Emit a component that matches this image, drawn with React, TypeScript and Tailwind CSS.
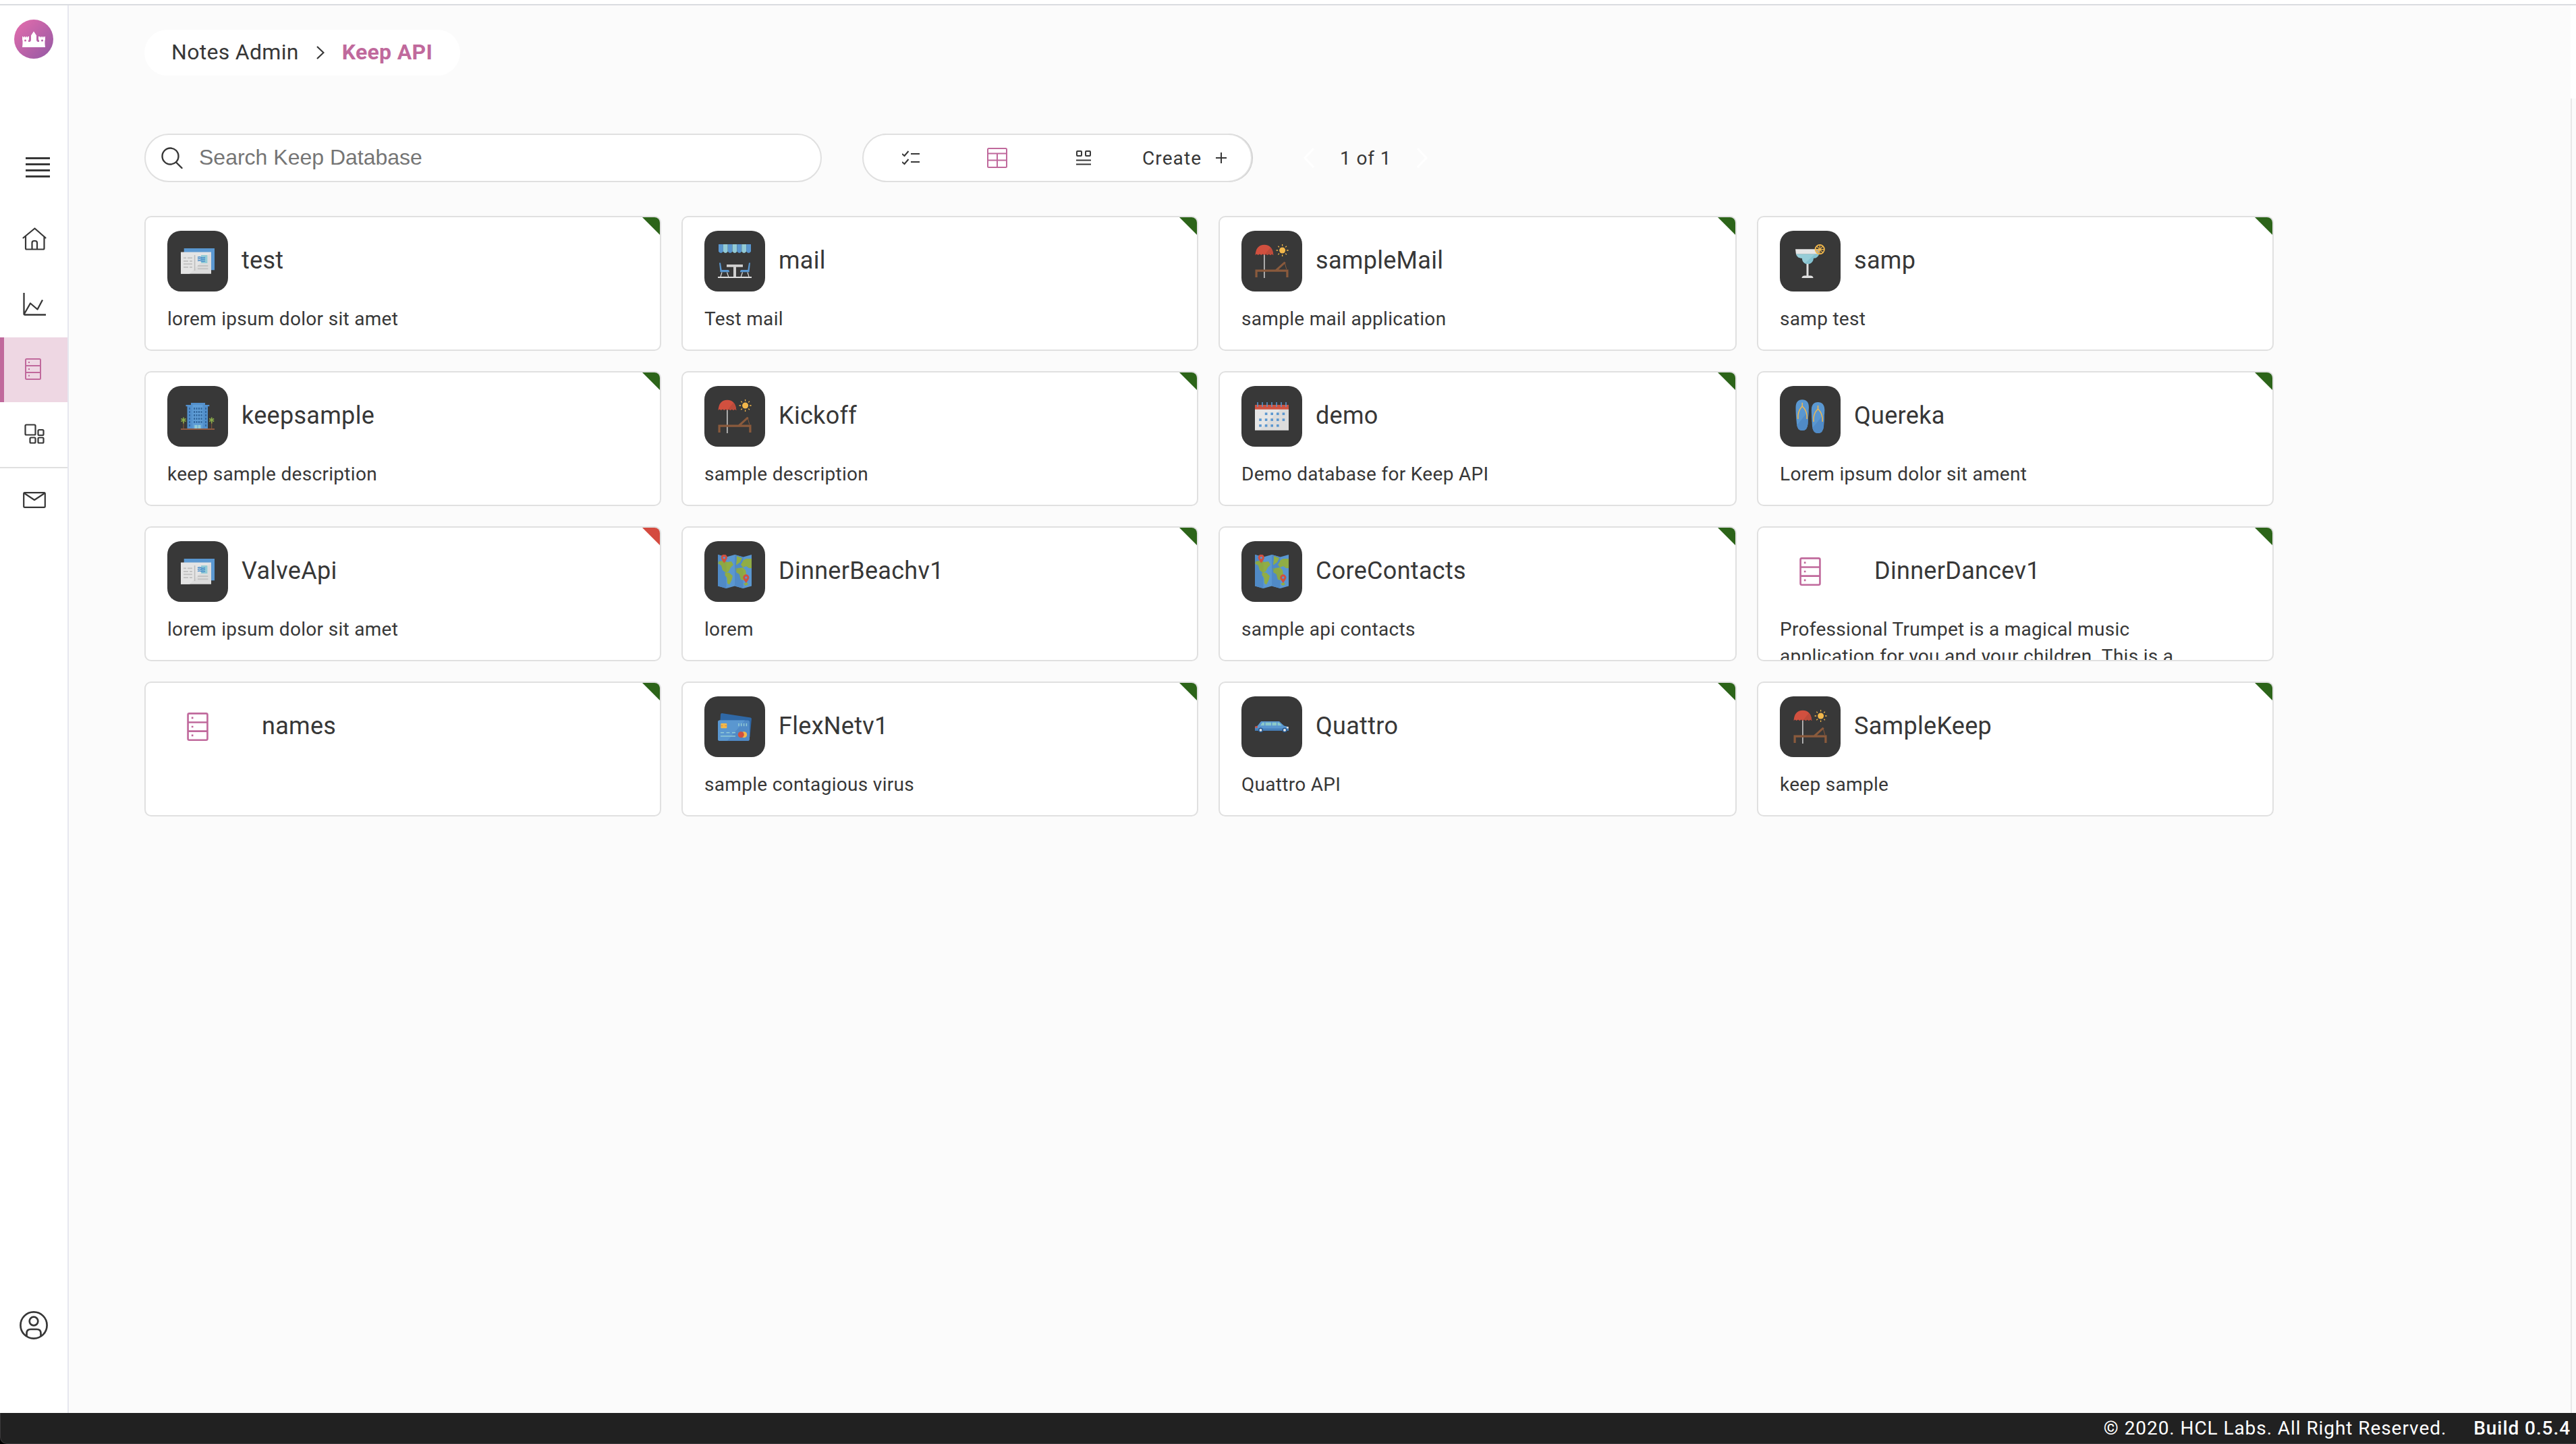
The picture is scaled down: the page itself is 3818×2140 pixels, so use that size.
import React from "react";

type IconName =
  | "news" | "cafe" | "beach" | "cocktail" | "building" | "calendar"
  | "sandals" | "map" | "cards" | "limo" | "database";

type Api = { name: string; description: string; icon: IconName; inactive?: boolean };

const APIS: Api[] = [
  { name: "test", description: "lorem ipsum dolor sit amet", icon: "news" },
  { name: "mail", description: "Test mail", icon: "cafe" },
  { name: "sampleMail", description: "sample mail application", icon: "beach" },
  { name: "samp", description: "samp test", icon: "cocktail" },
  { name: "keepsample", description: "keep sample description", icon: "building" },
  { name: "Kickoff", description: "sample description", icon: "beach" },
  { name: "demo", description: "Demo database for Keep API", icon: "calendar" },
  { name: "Quereka", description: "Lorem ipsum dolor sit ament", icon: "sandals" },
  { name: "ValveApi", description: "lorem ipsum dolor sit amet", icon: "news", inactive: true },
  { name: "DinnerBeachv1", description: "lorem", icon: "map" },
  { name: "CoreContacts", description: "sample api contacts", icon: "map" },
  {
    name: "DinnerDancev1",
    description: "Professional Trumpet is a magical music application for you and your children. This is a",
    icon: "database",
  },
  { name: "names", description: "", icon: "database" },
  { name: "FlexNetv1", description: "sample contagious virus", icon: "cards" },
  { name: "Quattro", description: "Quattro API", icon: "limo" },
  { name: "SampleKeep", description: "keep sample", icon: "beach" },
];

function News() {
  return (
    <>
      <path d="M4.7 6H50V38.3H4.7z" fill="#5a97d0" />
      <path d="M0 11.7H45V43.7H0z" fill="#dcdcdc" />
      <path d="M0 11.7H45L13 43.7H0z" fill="#e4e4e4" />
      <path d="M20.6 16V39" stroke="#bdbdbd" strokeWidth="1.6" />
      <path d="M4 20.3h4M10 20.3h7M4 25h7M13 25h4M4 29.3h13M4 34h7M13 34h4M25 32h15.4M25 36.3h15.4" stroke="#c3c3c3" strokeWidth="2" />
      <path d="M30 16H39.4V28H30z" fill="#93cbd6" />
      <path d="M25 19.5q2.5-1.5 5 0t6 0M25 22q2.5-1.5 5 0t6 0M25 24.7q2.5-1.5 5 0t6 0" stroke="#4a8ecb" strokeWidth="1.5" fill="none" />
    </>
  );
}

function Cafe() {
  const stripes = ["#5a97d0", "#93cbd6", "#5a97d0", "#93cbd6", "#5a97d0", "#93cbd6", "#5a97d0"];
  return (
    <>
      {stripes.map((c, i) => (
        <path key={i} d={`M${1 + i * 6.86} 0h6.86v10.5q-1 2.4-3.43 2.4t-3.43-2.4z`} fill={c} />
      ))}
      <path d="M0 49H50" stroke="#dedede" strokeWidth="2" />
      <path d="M13 30H37V33.8H27V48H23V33.8H13z" fill="#cfcfcf" />
      <path d="M6 41.5L4 48M13.5 41.5L15.7 48M44 41.5L46 48M36.5 41.5L34.3 48" stroke="#dedede" strokeWidth="1.2" />
      <path d="M2 27.5h2l1.7 10.5H15q2 0 2 3.3H3.5zM48 27.5h-2l-1.7 10.5H35q-2 0-2 3.3H46.5z" fill="#5a97d0" />
    </>
  );
}

function Beach() {
  return (
    <>
      <path d="M13.9 14V50" stroke="#dedede" strokeWidth="1.4" />
      <path d="M.5 16Q1.5 1 13.9.8Q26.3 1 27.3 16l-2-1.6-2.3 1.6-2.3-1.6-2.3 1.6-2.3-1.6-2.2 1.6-2.3-1.6L9.3 16 7 14.4 4.7 16 2.6 14.4z" fill="#d1503f" />
      <path d="M23 4.7Q27 9 27.3 16l-2-1.6-2.3 1.6-2.3-1.6-2.3 1.6-2.3-1.6-2.2 1.6z" fill="#bd4b3b" />
      <circle cx="40.6" cy="9" r="4.5" fill="#f3b84b" />
      <path d="M40.6 0v2.5M40.6 15.5V18M31.6 9h2.5M47.1 9h2.5M34.3 2.7L36 4.4M45.2 13.6l1.7 1.7M46.9 2.7l-1.7 1.7M36 13.6l-1.7 1.7" stroke="#f3b84b" strokeWidth="1.3" />
      <path d="M.5 37.4H30.3L43.5 25.7l2.3 1.7L35 37.4H49.5V49H46.3V40.7H3.7V49H.5z" fill="#8a5a3c" />
      <path d="M44 27l2.8 10" stroke="#8a5a3c" strokeWidth="1" />
    </>
  );
}

function Cocktail() {
  return (
    <>
      <path d="M3 7.3H39L38 14.7H4z" fill="#e6e6e6" />
      <path d="M4 14.7H38.2Q36 20.7 30 20.7Q29.5 27 23.5 29.3H18.5Q13 26 13 20.7Q6 20.5 4 14.7z" fill="#84c2d0" />
      <path d="M4 14.7H32L17 28Q13 26 13 20.7Q6 20.5 4 14.7z" fill="#97cdd8" />
      <path d="M19.5 29h3V46.5H26q3.5.5 3.5 3.5H12.5q0-3 3.5-3.5h3.5z" fill="#e0e0e0" />
      <circle cx="39.2" cy="7.6" r="6.7" fill="#393939" fillOpacity=".35" stroke="#f3b84b" strokeWidth="1.8" />
      <path d="M39.2 1v13.2M32.6 7.6h13.2M34.5 2.9l9.4 9.4M43.9 2.9l-9.4 9.4" stroke="#f3b84b" strokeWidth="1.2" />
    </>
  );
}

function Building() {
  return (
    <>
      <path d="M15 5H36V8H42.3V10.3H40V43.3H9.5V10.3H7.5V8H15z" fill="#5390cc" />
      <path d="M17.5 8H32.5V43H17.5z" fill="#5f9dd6" />
      {[12, 17, 22, 27, 32].map((y) => (
        <path key={y} d={`M12 ${y}h2v3h-2zM19 ${y}h2v3h-2zM22.5 ${y}h2v3h-2zM26 ${y}h2v3h-2zM29.5 ${y}h2v3h-2zM36 ${y}h2v3h-2z`} fill="#33689f" />
      ))}
      <path d="M12 37h2v3h-2zM36 37h2v3h-2z" fill="#33689f" />
      <path d="M20.3 38H24.5V43H20.3zM25.5 38H29.6V43H25.5z" fill="#93cbd6" />
      <path d="M4 31V43M45.7 31V43" stroke="#8a5a3c" strokeWidth="1" />
      <path d="M4 26.5v9M.5 28.5l7 4M7.5 28.5l-7 4M45.7 26.5v9M42.2 28.5l7 4M49.2 28.5l-7 4" stroke="#8cae4a" strokeWidth="1.6" />
      <path d="M0 44H50" stroke="#8f5a42" strokeWidth="2" />
    </>
  );
}

function Calendar() {
  const cols = [6.2, 14.8, 23.4, 32, 40.6];
  const rows: [number, number, number][] = [[19.5, 1, 5], [28.3, 0, 5], [37, 0, 4]];
  return (
    <>
      <path d="M0 14H50V46H0z" fill="#dcdcdc" />
      <path d="M0 14H38L6 46H0z" fill="#e6e6e6" />
      <path d="M0 45.5H50" stroke="#bababa" strokeWidth="1" />
      <path d="M0 8H50V14.7H0z" fill="#cf5341" />
      <path d="M4 4v7M11 4v7M18 4v7M25 4v7M32 4v7M39 4v7M46 4v7" stroke="#5a97d0" strokeWidth="1.5" />
      {rows.map(([y, from, to]) =>
        cols.slice(from, to).map((x) => <rect key={`${x}-${y}`} x={x} y={y} width="3.6" height="3.6" fill="#5a97d0" />)
      )}
    </>
  );
}

function Sandals() {
  return (
    <>
      <path d="M3.5 12Q3.5.3 13.2.3T23 12Q22 24 21.5 36Q21 46 13.2 46T5 36Q3.5 22 3.5 12z" fill="#5a97d0" />
      <path d="M26.8 16Q26.8 4 36.5 4T46.3 16Q46 28 45 40Q44 50 36.5 50T28 40Q27 26 26.8 16z" fill="#5a97d0" />
      <path d="M22.7 17Q22 28 21.5 36Q21 46 13.2 46Q7 46 5.3 38zM46 21Q45.5 32 45 40Q44 50 36.5 50Q30 50 28.3 42z" fill="#508ac6" />
      <path d="M13.2 4.7V10Q7.5 16 6.9 24v5M13.2 10Q19.5 16 20.1 24v5M36.5 9V14Q30.5 20 30 28v5M36.5 14Q42.5 20 43.2 28v5" stroke="#f3b84b" strokeWidth="1.5" fill="none" />
    </>
  );
}

function WorldMap() {
  return (
    <>
      <path d="M0 0L12.5 3.5L25 0L37.5 3.5L50 0V46.5L37.5 50L25 46.5L12.5 50L0 46.5z" fill="#5a97d0" />
      <path d="M0 0L12.5 3.5V50L0 46.5zM25 0L37.5 3.5V50L25 46.5z" fill="#508ac6" />
      <path d="M2 10L9 9l5 2 6-1 3 5-4 4-3 6-4 2-5-4-2-7-5-3zM10.5 27l6-.5 5.5 5-1.5 6-3.5 7-3-2-.5-8-3-4zM28 2l8 3-3 6-5 4-1 0 1-8zM38 8l4-2 8 0V20l-4 0-4-3-5 2-3-4zM29 20l8-1 4 4 1 6-3 9-5-1-2-8-5-3zM38 43l5-2 2 3-4 2z" fill="#90ad45" />
      <path d="M0 10l7-1 5.500 2V26L9 24 6 18 2 13zM25 20h8l4.500 3V37l-4-1-2-7-4-3z" fill="#85a345" fillOpacity=".5" />
      <path d="M9.3 12.500Q4.700 6.500 4.700 4.200A4.600 4.600 0 0 1 13.900 4.200Q13.900 6.500 9.300 12.500zM41.800 42Q37.200 36 37.200 33.900A4.600 4.600 0 0 1 46.400 33.900Q46.400 36 41.800 42z" fill="#d1503f" />
      <circle cx="9.3" cy="4.6" r="1.7" fill="#5a97d0" />
      <circle cx="41.8" cy="34" r="1.7" fill="#5a97d0" />
    </>
  );
}

function Cards() {
  return (
    <>
      <path d="M6 5L48.5 11.4Q50 11.8 49.9 13.5L47.5 40H2L4 7Q4.3 4.8 6 5z" fill="#2f68a6" />
      <rect y="15.5" width="47" height="30.5" rx="2.8" fill="#508ac6" />
      <path d="M2.8 15.5H40L14 46H2.8Q0 46 0 43V18.5Q0 15.5 2.8 15.5z" fill="#5a97d0" />
      <rect x="4.3" y="20" width="9" height="7.3" rx="1" fill="#f3b84b" />
      <path d="M4.3 23.7h3M10.3 23.7h3" stroke="#d98a3a" strokeWidth="1" />
      <path d="M31 20v4.3M34.8 20v4.3M38.6 20v4.3M42.4 20v4.3" stroke="#93cbd6" strokeWidth="1.5" />
      <path d="M4 33.7h5M12.5 33.7h5M21 33.7h5M4 39h22" stroke="#93cbd6" strokeWidth="1.6" />
      <circle cx="38.7" cy="36.7" r="4.5" fill="#f3b84b" />
      <circle cx="34.3" cy="36.7" r="4.5" fill="#d1503f" />
    </>
  );
}

function Limo() {
  return (
    <>
      <path d="M9 17H36L43 23.5 49 25Q50 27 49.8 30.5H0V25l4-1.5z" fill="#5a97d0" />
      <path d="M0 27.5H50V31H0z" fill="#467fb9" />
      <path d="M8 23.2L11 18.7H14V23.2zM15.5 18.7H24V23.2H15.5zM25.5 18.7H32V23.2H25.5zM33.5 18.7H35.5L40 23.2H33.5z" fill="#8cc9c8" />
      <path d="M.3 24.5l3.5-.8v3H.3z" fill="#d1503f" />
      <path d="M47 25h2.7v2.5H47z" fill="#e0e0e0" />
      <circle cx="8.5" cy="30" r="3.5" fill="#24558a" />
      <circle cx="44" cy="30" r="3.5" fill="#24558a" />
      <circle cx="8.5" cy="30" r="2" fill="#e6e6e6" />
      <circle cx="44" cy="30" r="2" fill="#e6e6e6" />
    </>
  );
}

const ART: Record<Exclude<IconName, "database">, () => React.JSX.Element> = {
  news: News, cafe: Cafe, beach: Beach, cocktail: Cocktail, building: Building,
  calendar: Calendar, sandals: Sandals, map: WorldMap, cards: Cards, limo: Limo,
};

function DatabaseIcon({ className }: { className: string }) {
  return (
    <svg viewBox="0 0 24 32" className={className} fill="none" stroke="#c0699c" strokeWidth="2">
      <rect x="1" y="1" width="22" height="30" rx="1.5" />
      <path d="M1 11h22M1 21h22" />
      <path d="M5 6h2M5 16h2M5 25.8h2" />
    </svg>
  );
}

function ApiCard({ api }: { api: Api }) {
  const Art = api.icon === "database" ? null : ART[api.icon];
  return (
    <div className="relative h-[200px] overflow-hidden rounded-[10px] border-2 border-[#e0e0e0] bg-white px-8 pt-5">
      <div
        className={
          "absolute right-0 top-0 size-[26px] [clip-path:polygon(0_0,100%_0,100%_100%)] " +
          (api.inactive ? "bg-[#d44a3f]" : "bg-[#2c6419]")
        }
      />
      <div className="flex items-center">
        {Art ? (
          <div className="mr-5 flex size-[90px] shrink-0 items-center justify-center rounded-[20px] bg-[#383838]">
            <svg viewBox="0 0 50 50" className="size-[50px]"><Art /></svg>
          </div>
        ) : (
          <div className="mr-[50px] flex size-[90px] shrink-0 items-center justify-center">
            <DatabaseIcon className="h-[42px] w-[32px]" />
          </div>
        )}
        <h2 className="pb-[2px] text-[36px] leading-[48px] tracking-[0.3px]">{api.name}</h2>
      </div>
      <p className="mt-[21px] w-[620px] text-[28px] leading-[40px] tracking-[0.3px]">{api.description}</p>
    </div>
  );
}

function NavItem({ active, children }: { active?: boolean; children: React.ReactNode }) {
  return (
    <div className={"flex h-24 w-[100px] shrink-0 items-center justify-center border-l-[6px] pr-[6px] " + (active ? "border-[#c0699c] bg-[#eed7e3]" : "border-transparent")}>
      {children}
    </div>
  );
}

function Sidebar() {
  return (
    <nav className="flex w-[102px] shrink-0 flex-col border-r-2 border-[#e6e7ef] bg-white">
      <svg viewBox="0 0 58 58" className="ml-[21px] mt-[21px] size-[58px]">
        <defs>
          <linearGradient id="brand" x1="0" y1="0" x2="1" y2="1">
            <stop offset="0.1" stopColor="#de6bac" />
            <stop offset="0.9" stopColor="#9b5ba5" />
          </linearGradient>
        </defs>
        <circle cx="29" cy="29" r="29" fill="url(#brand)" />
        <path d="M12 25h1.3v1.2h1.3V25h1.4v1.2h1.3V25h1.4v1.2H20V25h2v4.5l-1 1.5v2h2q2-.5 2-3V23.5l4-6 4 6V30q0 2.500 2 3h2v-2l-1-1.500V25h2v1.200h1.300V25h1.400v1.200H42V25h1.400v1.200h1.300V25H46v5l-.5 1v5l.5 5H12l.5-5v-5L12 30z" fill="#fff" />
        <circle cx="16.5" cy="31" r="1.5" fill="#c864a8" />
        <circle cx="41.5" cy="31" r="1.5" fill="#b060a6" />
      </svg>
      <svg viewBox="0 0 36 30" className="ml-[38px] mt-[146px] h-[30px] w-[36px]" stroke="#373737" strokeWidth="3">
        <path d="M0 1.5h36M0 10.5h36M0 19.5h36M0 28.5h36" />
      </svg>
      <div className="mt-[45px] flex flex-col">
        <NavItem>
          <svg viewBox="0 0 36 34" className="ml-[2px] mt-[-4px] h-[34px] w-[36px]" fill="none" stroke="#373737" strokeWidth="2.2" strokeLinecap="round" strokeLinejoin="round">
            <path d="M1.5 15.5L18.5 1.5l16 14M5 13.5V31q0 1.5 1.5 1.5H31q1.5 0 1.5-1.5V13.5M14.5 32V23q0-3 3-3h1.5q3 0 3 3v9" />
          </svg>
        </NavItem>
        <NavItem>
          <svg viewBox="0 0 34 34" className="ml-[2px] mt-[-2px] h-[34px] w-[34px]" fill="none" stroke="#373737" strokeWidth="2.3">
            <path d="M1.5 0V31q0 1.5 1.5 1.5H34M1.5 32L11 15.5 21.5 24.5 29 10.5" strokeLinejoin="round" />
          </svg>
        </NavItem>
        <NavItem active><DatabaseIcon className="mr-[2px] mt-[-2px] h-[32px] w-[24px]" /></NavItem>
        <NavItem>
          <svg viewBox="0 0 30 30" className="ml-[2px] mt-[-2px] size-[30px]" fill="none" stroke="#373737" strokeWidth="2.2">
            <rect x="1.5" y="1.5" width="15" height="15" rx="1.5" />
            <rect x="20.5" y="9" width="8" height="8" rx="1.5" />
            <rect x="8.5" y="20.5" width="8" height="8" rx="1.5" />
            <rect x="20.5" y="20.5" width="8" height="8" rx="1.5" />
          </svg>
        </NavItem>
        <div className="h-[2px] bg-[#e0e0e0]" />
        <NavItem>
          <svg viewBox="0 0 34 24" className="ml-[2px] mt-[-2px] h-[24px] w-[34px]" fill="none" stroke="#373737" strokeWidth="2.2" strokeLinejoin="round">
            <rect x="1.2" y="1.2" width="31.6" height="21.6" rx="1.5" />
            <path d="M2 2l15 10L32 2" />
          </svg>
        </NavItem>
      </div>
      <svg viewBox="0 0 42 42" className="mb-[109px] ml-[29px] mt-auto size-[42px]" fill="none" stroke="#373737" strokeWidth="2.7">
        <circle cx="21" cy="21" r="19.6" />
        <circle cx="21" cy="15" r="6.3" />
        <path d="M10.5 37.5V33q0-6 6-6h9q6 0 6 6v4.5" />
      </svg>
    </nav>
  );
}

function Toolbar() {
  return (
    <div className="mt-[86px] flex items-center">
      <div className="flex h-[72px] w-[1004px] items-center rounded-full border-2 border-[#e0e0e0] bg-white pl-[23px]">
        <svg viewBox="0 0 32 32" className="size-8" fill="none" stroke="#373737" strokeWidth="2.4" strokeLinecap="round">
          <circle cx="13.5" cy="13.5" r="12" />
          <path d="M22 22.5L30.5 31" />
        </svg>
        <input
          className="ml-6 w-[800px] bg-transparent pb-[2px] font-['Liberation_Sans',Arial,sans-serif] text-[32px] leading-[40px] outline-none placeholder:text-[#757575]"
          placeholder="Search Keep Database"
        />
      </div>
      <div className="ml-[60px] flex h-[72px] w-[578px] items-center rounded-full border-2 border-[#e0e0e0] bg-white pl-[57px] shadow-[1px_0_0_#c8c8c8]">
        <svg viewBox="0 0 26 22" className="h-[22px] w-[26px]" fill="none" stroke="#373737" strokeWidth="2">
          <path d="M0 5l3.5 3L9.5 1M0 17l3.5 3L9.5 13M13 5h13M13 17h13" />
        </svg>
        <svg viewBox="0 0 30 30" className="ml-[100px] size-[30px]" fill="none" stroke="#c0699c" strokeWidth="2">
          <rect x="1" y="1" width="28" height="28" rx="1.5" />
          <path d="M1 8.5h28M1 18.5h28M15 8.5V29" />
        </svg>
        <svg viewBox="0 0 22 22" className="ml-[102px] size-[22px]" fill="none" stroke="#373737" strokeWidth="2">
          <rect x="1" y="1" width="7" height="7" rx="1" />
          <rect x="14" y="1" width="7" height="7" rx="1" />
          <path d="M0 14.5h22M0 20.5h22" />
        </svg>
        <span className="ml-[76px] pt-[2px] text-[28px] leading-[40px] tracking-[1.1px]">Create</span>
        <svg viewBox="0 0 16 16" className="ml-[21px] size-4" stroke="#373737" strokeWidth="2"><path d="M8 0v16M0 8h16" /></svg>
      </div>
      <div className="ml-[76px] flex items-center">
        <svg viewBox="0 0 16 30" className="h-[30px] w-4" fill="none" stroke="#fff" strokeWidth="3"><path d="M15 1L2 15l13 14" /></svg>
        <span className="mx-[38px] pt-[2px] text-[28px] leading-[40px] tracking-[0.9px]">1 of 1</span>
        <svg viewBox="0 0 16 30" className="h-[30px] w-4" fill="none" stroke="#fff" strokeWidth="3"><path d="M1 1l13 14L1 29" /></svg>
      </div>
    </div>
  );
}

export default function App() {
  return (
    <div className="flex h-[2140px] w-[3818px] flex-col overflow-hidden bg-white font-[Roboto,sans-serif] text-[#373737]">
      <div className="h-2 shrink-0 border-b-2 border-[#dadce0]" />
      <div className="flex min-h-0 flex-1">
        <Sidebar />
        <main className="min-w-0 flex-1 bg-[#fbfbfb] pl-28 pt-9">
          <div className="flex h-[68px] w-[468px] items-center rounded-full bg-white pl-10 text-[32px] leading-[40px] tracking-[0.3px]">
            <span className="pb-[2px]">Notes Admin</span>
            <svg viewBox="0 0 12 20" className="ml-[26px] h-5 w-3" fill="none" stroke="#373737" strokeWidth="2.2"><path d="M1 1l9.5 9L1 19" /></svg>
            <span className="ml-[26px] pb-[2px] font-bold text-[#c0699c]">Keep API</span>
          </div>
          <Toolbar />
          <div className="mt-[50px] grid grid-cols-[766px_766px_768px_766px] gap-[30px]">
            {APIS.map((api) => <ApiCard key={api.name} api={api} />)}
          </div>
        </main>
        <div className="mt-[138px] w-2 border-l-2 border-[#e8e8e8] bg-[#fbfbfb]" />
      </div>
      <div className="h-[46px] shrink-0 bg-black">
        <footer className="flex h-full items-center justify-end rounded-bl-[10px] border-b border-l border-[#3c3a3c] bg-[#212121] pr-2 text-[28px] leading-[40px] tracking-[0.93px] text-white">
          <span>© 2020. HCL Labs. All Right Reserved.</span>
          <span className="ml-10 font-medium">Build 0.5.4</span>
        </footer>
      </div>
    </div>
  );
}
